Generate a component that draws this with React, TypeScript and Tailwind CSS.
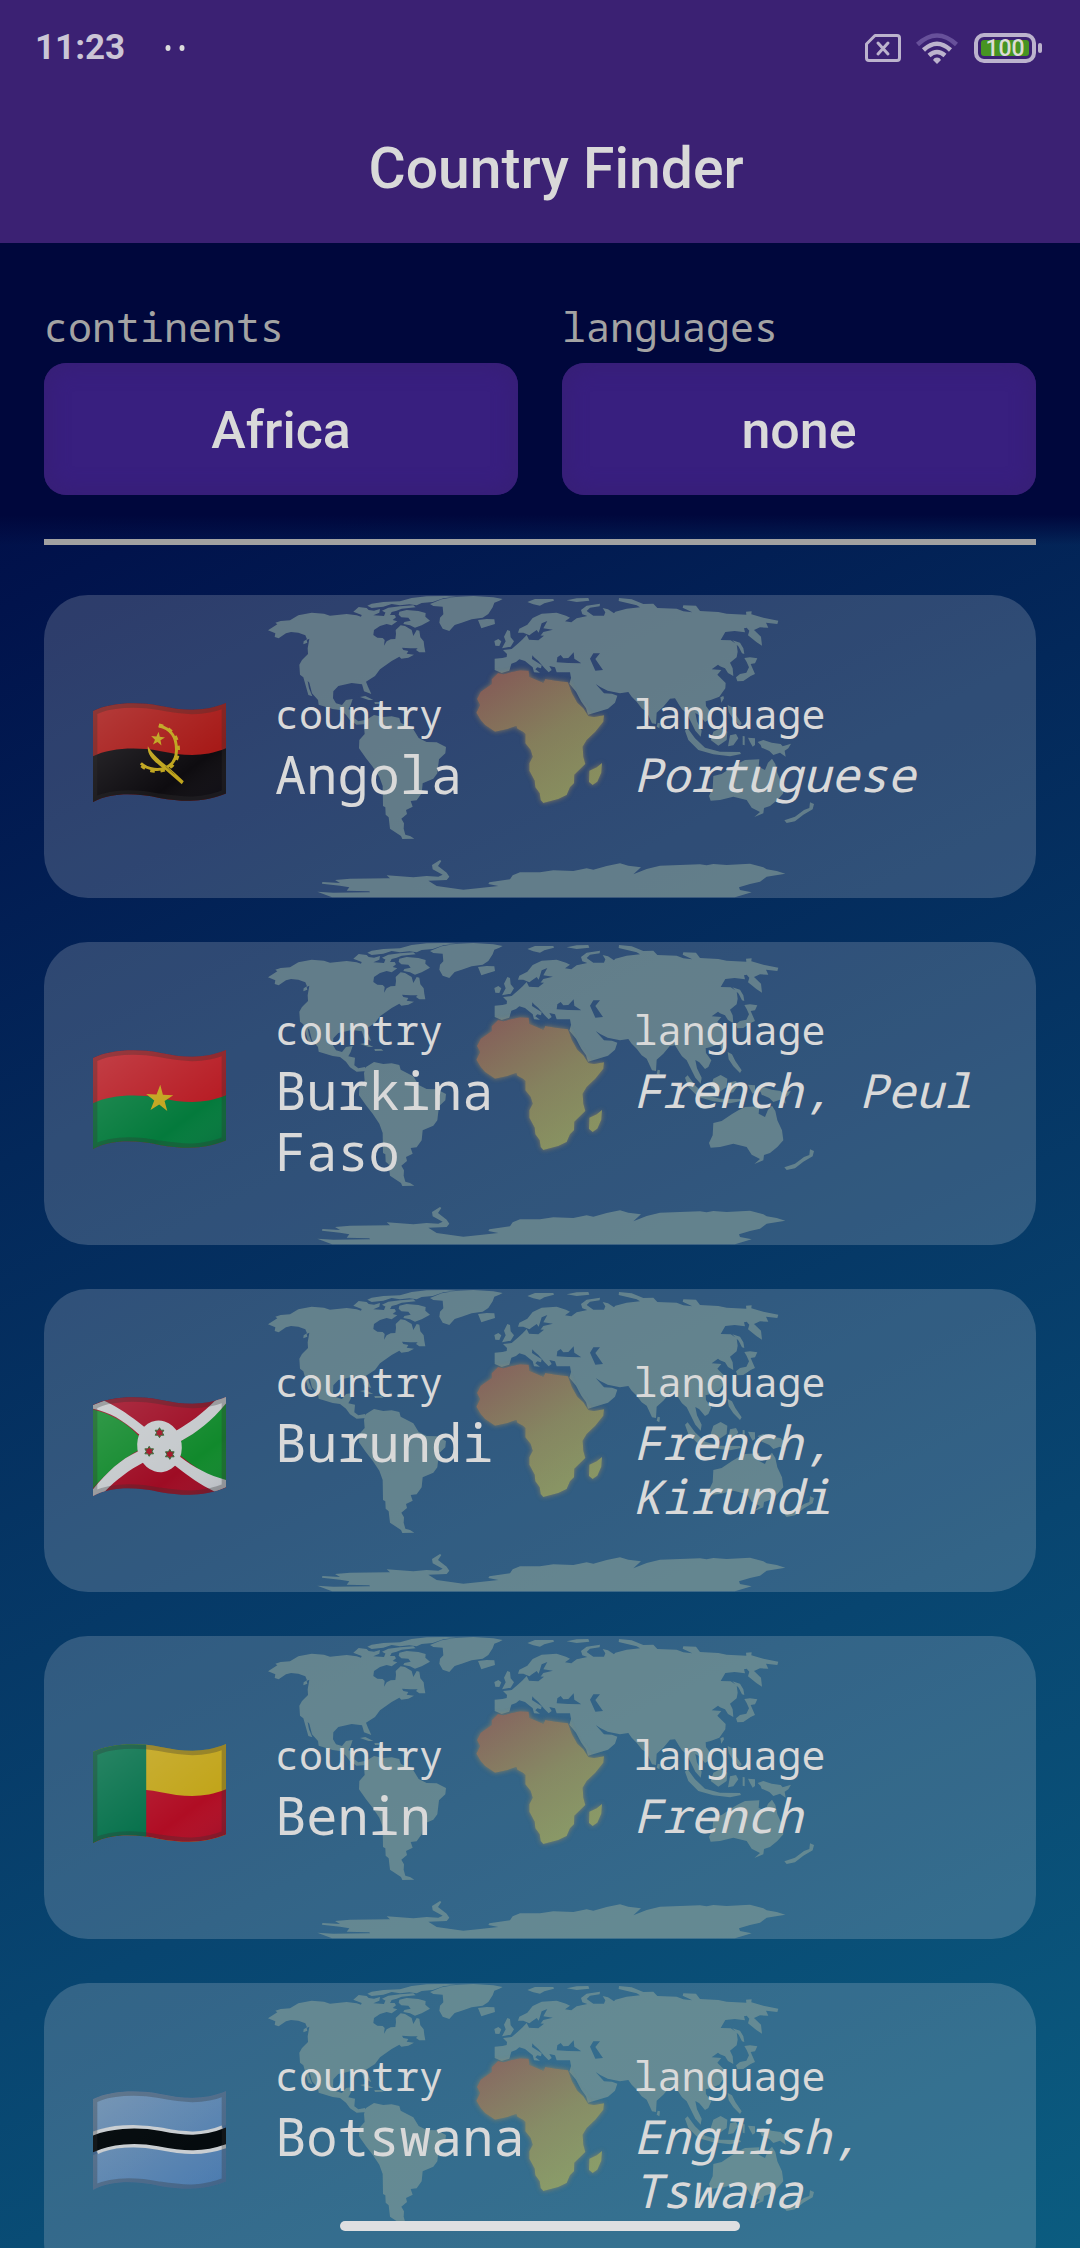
import React from "react";

type Flag = "angola" | "burkina" | "burundi" | "benin" | "botswana";

const countries: { name: string; languages: string; flag: Flag }[] = [
  { name: "Angola", languages: "Portuguese", flag: "angola" },
  { name: "Burkina Faso", languages: "French, Peul", flag: "burkina" },
  { name: "Burundi", languages: "French, Kirundi", flag: "burundi" },
  { name: "Benin", languages: "French", flag: "benin" },
  { name: "Botswana", languages: "English, Tswana", flag: "botswana" },
];

const OUTLINE =
  "M100 155C150 130 230 126 300 139C370 153 430 160 500 131V403C430 432 370 427 300 416C230 402 160 398 100 428Z";

const LOWER =
  "M100 291C150 266 230 262 300 275C370 289 430 296 500 267V440H100Z";

function star(cx: number, cy: number, r: number, points: number, inner: number, turn: number) {
  const out: string[] = [];
  for (let i = 0; i < points * 2; i++) {
    const radius = i % 2 ? r * inner : r;
    const a = ((turn - 90 + (i * 180) / points) * Math.PI) / 180;
    out.push(`${(cx + radius * Math.cos(a)).toFixed(1)},${(cy + radius * Math.sin(a)).toFixed(1)}`);
  }
  return out.join(" ");
}

function FlagArt({ flag }: { flag: Flag }) {
  switch (flag) {
    case "angola":
      return (
        <>
          <rect x="90" y="120" width="420" height="320" fill="#a71a18" />
          <path d={LOWER} fill="#0e0c10" />
          <path d="M298 199C338 208 352 240 351 274C350 312 322 334 284 330C268 328 254 322 244 312" fill="none" stroke="#bfa41c" strokeWidth="9" />
          <path d="M298 198C342 207 357 240 356 274C355 316 324 338 284 335C266 333 252 326 243 315" fill="none" stroke="#bfa41c" strokeWidth="11" strokeDasharray="13 17" />
          <path d="M265 261C276 280 300 304 326 323L348 343L373 366L367 375L342 353L316 331C286 308 262 290 265 261Z" fill="#bfa41c" />
          <path d="M318 321L345 345" stroke="#6b5c10" strokeWidth="2" />
          <polygon points={star(295, 239, 22, 5, 0.4, 6)} fill="#bfa41c" />
        </>
      );
    case "burkina":
      return (
        <>
          <rect x="90" y="120" width="420" height="320" fill="#b81e26" />
          <path d={LOWER} fill="#047a3c" />
          <polygon points={star(300, 278, 43, 5, 0.38, 3)} fill="#c3a41b" />
        </>
      );
    case "burundi":
      return (
        <>
          <rect x="90" y="120" width="420" height="320" fill="#9e0c24" />
          <path d="M100 168C150 180 200 205 240 250L240 290C190 315 145 355 100 405Z" fill="#11892c" />
          <path d="M500 150C460 195 415 235 360 265V305C410 345 450 372 500 384Z" fill="#11892c" />
          <path d="M100 166C150 176 190 200 236 241L300 270L236 294C180 320 145 355 100 408V440L134 416C170 378 212 348 250 328L300 300L350 340C390 370 420 395 468 416L500 402V380C450 368 400 340 364 312L300 270L366 262C410 238 455 205 500 150V120L466 143C430 180 390 210 350 232L300 260L250 217C215 190 175 160 134 142L100 155Z" fill="#c5c9cc" />
          <ellipse cx="300" cy="279" rx="67" ry="78" transform="rotate(-8 300 279)" fill="#c5c9cc" />
          {[[300, 238], [269, 294], [331, 303]].map(([x, y]) => (
            <polygon key={x} points={star(x, y, 15, 6, 0.58, 0)} fill="#a51327" stroke="#2f6634" strokeWidth="3" />
          ))}
        </>
      );
    case "benin":
      return (
        <>
          <rect x="90" y="120" width="420" height="320" fill="#c2a51b" />
          <path d={LOWER} fill="#b00d24" />
          <rect x="90" y="120" width="170" height="320" fill="#04704a" />
        </>
      );
    case "botswana":
      return (
        <>
          <rect x="90" y="120" width="420" height="320" fill="#4a7bb0" />
          <path d="M100 290C150 265 230 261 300 274C370 288 430 295 500 266" fill="none" stroke="#c9ced2" strokeWidth="68" />
          <path d="M90 294C150 265 230 261 300 274C370 288 430 295 510 262" fill="none" stroke="#050b0e" strokeWidth="47" />
        </>
      );
  }
}

function FlagIcon({ flag, label }: { flag: Flag; label: string }) {
  const clip = `clip-${flag}`;
  const shine = `shine-${flag}`;
  const shineOpacity = flag === "botswana" ? 0.12 : 1;
  return (
    <svg viewBox="100 128 400 303" className="h-[101px] w-[133px]" role="img" aria-label={`Flag of ${label}`}>
      <defs>
        <clipPath id={clip}>
          <path d={OUTLINE} />
        </clipPath>
        <linearGradient id={shine} x1="0" y1="0" x2="1" y2="1">
          <stop offset="0" stopColor="#ffffff" stopOpacity="0.15" />
          <stop offset="0.7" stopColor="#ffffff" stopOpacity="0" />
          <stop offset="1" stopColor="#000033" stopOpacity="0.1" />
        </linearGradient>
        <linearGradient id="sky" x1="0" y1="0" x2="1" y2="1">
          <stop offset="0" stopColor="#aab4b8" stopOpacity="0.45" />
          <stop offset="1" stopColor="#aab4b8" stopOpacity="0" />
        </linearGradient>
      </defs>
      <g clipPath={`url(#${clip})`}>
        <FlagArt flag={flag} />
        {flag === "botswana" && (
          <path
            d="M100 155C150 130 230 126 300 139C370 153 430 160 500 131V232C430 261 370 254 300 240C230 227 150 231 100 256ZM100 324C150 299 230 295 300 308C370 322 430 329 500 300V403C430 432 370 427 300 416C230 402 160 398 100 428Z"
            fill="url(#sky)"
          />
        )}
        <path d={OUTLINE} fill={`url(#${shine})`} fillOpacity={shineOpacity} />
        <path d={OUTLINE} fill="none" stroke="#333333" strokeOpacity="0.3" strokeWidth="26" />
      </g>
    </svg>
  );
}

const LAND = [
  // North America
  "M84 151L112 133L106 128L122 123L150 121L175 106L215 98L252 101L270 107L320 102L350 106L363 110L365 105L340 95L356 81L380 84L386 90L402 92L420 87L418 98L400 106L432 108L436 98L446 92L455 97L450 105L464 105L468 112L458 120L472 124L455 136L440 132L420 138L402 150L400 165L412 173L428 174L434 180L432 197L440 184L452 178L466 177L468 162L467 150L482 136L495 138L515 150L520 168L530 150L538 152L541 172L551 184L553 200L556 217L538 217L528 210L533 205L510 205L486 203L490 210L505 213L500 221L522 224L505 233L484 236L478 230L455 243L420 268L405 288L378 305L384 320L394 342L372 334L366 313L335 309L295 318L280 334L279 355L288 370L306 375L318 360L338 357L332 375L325 388L345 392L343 415L355 424L375 420L380 432L350 434L330 421L318 404L300 390L278 387L236 374L234 360L216 340L208 308L203 303L207 325L217 349L205 345L190 292L180 284L178 254L186 240L204 222L203 205L208 176L200 180L202 188L190 193L191 184L201 178L196 166L175 158L153 156L138 160L116 175L104 171L106 160Z",
  // Arctic islands
  "M382 77L395 71L430 66L480 64L515 54L560 49L620 48L650 50L610 55L578 66L545 69L530 76L508 73L480 76L455 72L430 80L395 84Z",
  "M426 92L445 83L480 79L520 76L527 82L485 86L470 92L440 100Z",
  "M478 95L500 90L535 93L557 99L556 110L570 122L545 136L525 143L510 136L490 132L493 126L512 122L505 113L484 112L476 104Z",
  // Greenland
  "M570 72L605 58L650 50L700 48L760 52L788 57L778 62L763 68L758 82L745 102L728 113L695 118L665 128L644 135L628 153L608 146L598 128L600 113L610 103L608 80L580 78Z",
  "M714 120L740 117L763 118L765 132L738 140L724 145Z",
  // Caribbean
  "M360 351L376 348L400 360L386 360Z M403 366L424 366L430 371L405 372Z",
  // South America
  "M378 420L402 405L430 411L455 409L478 414L482 428L520 448L536 474L560 486L590 487L618 501L616 520L597 538L592 580L580 596L548 610L545 640L530 661L512 663L518 680L498 690L501 702L484 716L492 730L491 746L496 764L510 768L523 776L487 777L483 768L450 746L446 712L437 704L436 682L429 678L428 618L418 590L398 560L378 535L357 505L358 480L374 462L372 438Z",
  // British Isles
  "M802 150L810 153L812 172L822 184L812 200L786 205L797 184L792 170Z M763 183L775 177L784 184L778 198L766 197Z",
  // Scandinavia and Svalbard
  "M862 66L885 57L940 57L942 62L913 70L900 77L880 73Z M980 61L1010 55L1045 54L1048 62L1010 66Z",
  // Eurasia
  "M764 236L787 234L800 231L801 222L789 210L815 207L835 190L848 178L860 165L867 179L895 181L912 167L892 166L890 153L868 166L850 158L834 158L838 146L862 134L878 114L905 101L950 98L978 107L990 113L975 124L994 127L1010 115L1042 108L1027 103L1023 90L1040 77L1080 71L1079 79L1050 83L1040 93L1060 107L1092 107L1096 97L1088 84L1104 88L1122 100L1125 121L1118 104L1126 95L1160 86L1200 82L1190 76L1136 63L1137 54L1175 58L1210 72L1240 71L1252 84L1310 86L1330 94L1357 97L1328 83L1330 76L1368 77L1380 93L1435 96L1460 101L1519 104L1518 95L1535 94L1534 103L1570 113L1615 122L1612 132L1578 128L1585 143L1560 142L1542 150L1563 170L1566 197L1550 187L1524 166L1528 152L1520 143L1512 145L1515 157L1484 153L1456 156L1442 180L1472 181L1490 193L1493 215L1490 232L1470 248L1478 265L1480 288L1464 279L1455 265L1440 259L1434 254L1415 268L1444 270L1432 284L1457 309L1456 325L1438 350L1412 360L1397 364L1398 378L1414 400L1405 420L1395 426L1378 406L1366 399L1371 424L1385 452L1382 470L1366 452L1350 420L1340 400L1326 388L1318 376L1305 355L1290 356L1270 380L1250 398L1248 432L1236 430L1220 395L1205 385L1190 365L1175 350L1165 336L1140 340L1103 332L1082 322L1067 312L1092 340L1116 341L1132 347L1125 368L1104 386L1072 396L1044 404L1038 385L1024 365L1008 335L988 311L993 294L990 277L950 277L945 262L928 258L935 270L926 277L914 265L895 243L882 232L877 226L876 237L905 256L903 265L892 262L886 268L900 278L882 277L878 262L855 243L838 238L828 246L814 251L808 272L785 279L764 270Z",
  // Japan, Korea, Kamchatka
  "M1477 181L1500 188L1510 205L1513 222L1506 220L1496 200Z M1513 234L1530 232L1552 235L1545 250L1532 252L1545 282L1532 288L1510 303L1492 304L1488 292L1500 282L1519 278L1527 262L1520 246Z",
  "M1441 352L1450 348L1452 355L1444 368Z M1463 375L1476 382L1486 402L1505 430L1500 438L1480 418L1466 397Z",
  "M1253 428L1260 430L1258 445L1250 440Z",
  // Indonesia and New Guinea
  "M1343 445L1365 475L1395 503L1440 515L1500 516L1503 522L1470 529L1420 523L1375 510L1345 480L1335 452Z",
  "M1420 455L1442 444L1462 455L1460 480L1435 497L1412 480Z M1470 466L1488 462L1495 475L1480 496L1464 499Z M1508 468L1514 469L1514 496L1508 494Z M1524 473L1545 475L1545 495L1538 500L1530 486Z",
  "M1553 486L1570 480L1595 488L1622 492L1628 499L1653 491L1645 505L1634 512L1637 530L1620 518L1600 525L1588 513L1565 503L1562 495Z",
  // Australia and New Zealand
  "M1420 588L1445 582L1475 562L1495 550L1515 540L1558 538L1556 560L1575 570L1584 548L1596 536L1606 552L1612 580L1626 610L1630 640L1612 660L1590 678L1572 684L1570 700L1543 711L1560 696L1535 683L1520 660L1480 650L1440 660L1412 662L1407 648L1418 625Z",
  "M1710 667L1722 672L1718 688L1690 704L1665 724L1640 729L1633 721L1665 710L1692 690L1708 684Z",
  // Antarctica
  "M232 935L280 938L390 937L388 934L320 932L328 922L300 917L246 911L247 906L300 909L285 900L330 896L450 895L440 886L520 892L560 888L595 890L608 884L578 868L576 855L600 840L604 843L594 858L620 878L628 890L620 900L565 902L590 918L670 929L720 924L775 918L745 912L748 907L810 898L818 886L840 877L900 877L940 871L1000 873L1040 865L1060 869L1100 858L1140 850L1165 857L1203 862L1180 883L1220 867L1260 857L1380 853L1400 856L1420 852L1460 855L1530 851L1570 862L1580 868L1610 873L1636 881L1580 890L1560 905L1530 912L1497 922L1500 930L1535 937L1485 952L276 952Z",
].join(" ");

const AFRICA =
  "M774 279L790 283L812 277L840 271L866 272L868 290L910 308L916 297L948 302L984 307L996 340L1012 368L1030 385L1045 408L1062 411L1092 406L1090 425L1066 455L1040 480L1028 500L1030 530L1036 552L1003 584L1002 610L990 622L980 645L955 657L910 669L902 660L899 640L886 622L884 602L868 572L868 550L878 530L872 510L856 490L856 462L850 456L832 446L829 438L800 448L765 455L735 435L722 420L709 398L720 375L711 357L722 335L755 312L755 298Z M1086 549L1084 578L1072 605L1058 615L1047 606L1048 572L1070 562Z";

const SEAS =
  "M950 247L952 232L962 225L970 235L985 234L1001 217L1003 236L1024 250L985 249Z M1050 236L1060 220L1080 220L1066 237L1089 270L1066 272Z M872 163L890 150L896 158L905 130L922 123L910 145L939 149L910 156L898 172L888 180L870 176Z";

function WorldMap() {
  return (
    <svg viewBox="-588 45 2976 909" className="absolute inset-0 h-full w-full" aria-hidden="true">
      <defs>
        <linearGradient id="africa-fill" x1="0" y1="0" x2="0.6" y2="1">
          <stop offset="0.1" stopColor="#b96c48" />
          <stop offset="0.6" stopColor="#b9a04e" />
          <stop offset="1" stopColor="#beb852" />
        </linearGradient>
        <filter id="glow" x="-20%" y="-20%" width="140%" height="140%">
          <feGaussianBlur stdDeviation="8" />
        </filter>
        <mask id="sea-mask" maskUnits="userSpaceOnUse" x="-588" y="45" width="2976" height="909">
          <rect x="-588" y="45" width="2976" height="909" fill="white" />
          <path d={SEAS} fill="black" />
        </mask>
        <mask id="africa-mask" maskUnits="userSpaceOnUse" x="-588" y="45" width="2976" height="909">
          <rect x="-588" y="45" width="2976" height="909" fill="white" />
          <path d={AFRICA} fill="black" />
        </mask>
      </defs>
      <path d={LAND} fill="#859e98" fillOpacity="0.6" mask="url(#sea-mask)" />
      <g mask="url(#africa-mask)">
        <path d={AFRICA} fill="#a98b52" fillOpacity="0.7" filter="url(#glow)" />
      </g>
      <path d={AFRICA} fill="url(#africa-fill)" fillOpacity="0.62" />
    </svg>
  );
}

function StatusBar() {
  return (
    <div className="flex h-24 items-center pr-[38px] pl-[35px] text-[#cbc5d6]">
      <span className="text-[35px] leading-10 font-bold">11:23</span>
      <svg viewBox="0 0 20 6" className="ml-10 h-[6px] w-5" aria-hidden="true">
        <ellipse cx="3" cy="3" rx="2.5" ry="3" fill="#dcdcdc" />
        <ellipse cx="17" cy="3" rx="2.5" ry="3" fill="#dcdcdc" />
      </svg>
      <svg viewBox="0 0 36 28" className="ml-auto h-7 w-9" fill="none" stroke="#bcb3cd" strokeWidth="3" aria-label="No SIM">
        <path d="M10 1.5H32Q34.500 1.500 34.500 4V24Q34.500 26.500 32 26.500H4Q1.500 26.500 1.500 24V10Z" strokeLinejoin="round" />
        <path d="M13 9L23 20M23 9L13 20" strokeLinecap="round" />
      </svg>
      <svg viewBox="0 0 42 31" className="ml-[15px] h-[31px] w-[42px]" fill="none" stroke="#bcb3cd" strokeWidth="4.500" aria-label="Wi-Fi">
        <path d="M1.500 11.500Q21 -6.500 40.500 11.500" stroke="#67509a" />
        <path d="M7.500 17Q21 4.500 34.500 17" />
        <path d="M13 22.500Q21 15.500 29 22.500" />
        <path d="M21 31L17 27A4.500 4.500 0 0 1 25 27Z" fill="#bcb3cd" stroke="none" />
      </svg>
      <div className="ml-4 flex items-center gap-[2px]">
        <span className="flex h-[30px] w-[62px] items-center justify-center rounded-[10px] border-4 border-[#bcb3cd] p-[3px]">
          <span className="flex h-4 w-full items-center justify-center rounded-[3px] bg-[#479422] text-[23px] leading-none font-medium text-[#dcdcd6]">100</span>
        </span>
        <span className="h-[10px] w-1 rounded-full bg-[#bcb3cd]" />
      </div>
    </div>
  );
}

function Filter({ id, label, value }: { id: string; label: string; value: string }) {
  return (
    <div className="flex flex-1 flex-col">
      <label htmlFor={id} className="font-['Noto_Sans_Mono','DejaVu_Sans_Mono',monospace] text-[40px] leading-[48px] text-[#a3a3a3]">
        {label}
      </label>
      <button
        id={id}
        type="button"
        className="mt-3 flex h-[132px] items-center justify-center rounded-[22px] bg-[#381f7f] pt-1 text-[52px] font-medium text-[#d9d9d9] shadow-[inset_0_0_20px_4px_#371f76]"
      >
        {value}
      </button>
    </div>
  );
}

function CountryCard({ name, languages, flag }: { name: string; languages: string; flag: Flag }) {
  return (
    <li className="relative flex h-[303px] shrink-0 items-center overflow-hidden rounded-[44px] bg-[#e0e0e8]/20 pr-11 pl-[49px]">
      <WorldMap />
      <div className="relative mt-3 w-[182px] shrink-0">
        <FlagIcon flag={flag} label={name} />
      </div>
      <dl className="relative grid flex-1 grid-cols-2 font-['Noto_Sans_Mono','DejaVu_Sans_Mono',monospace] text-[#d9d9d9]">
        <div>
          <dt className="text-[40px] leading-[47px]">country</dt>
          <dd className="mt-[6px] text-[52px] leading-[61px]">{name}</dd>
        </div>
        <div>
          <dt className="text-[40px] leading-[47px]">language</dt>
          <dd className="mt-[10px] text-[47px] leading-[54px] italic">{languages}</dd>
        </div>
      </dl>
    </li>
  );
}

export default function App() {
  return (
    <div className="relative flex h-screen flex-col overflow-hidden bg-[linear-gradient(154deg,#00003c_0%,#01134c_22%,#03285a_42%,#084570_73%,#0b5c80_100%)] font-[Roboto,sans-serif]">
      <header className="shrink-0 bg-[#3b2173]">
        <StatusBar />
        <h1 className="pt-[37px] pb-[38px] pl-8 text-center text-[57px] leading-[72px] font-medium text-[#d9d9d9]">Country Finder</h1>
      </header>
      <section className="shrink-0 bg-[linear-gradient(#00073c_90%,transparent)] px-11 pt-15">
        <div className="flex gap-11">
          <Filter id="continents" label="continents" value="Africa" />
          <Filter id="languages" label="languages" value="none" />
        </div>
        <hr className="mt-11 border-t-[6px] border-[#a1a1a1]" />
      </section>
      <ul className="flex min-h-0 flex-1 flex-col gap-11 overflow-hidden px-11 pt-[50px]">
        {countries.map((c) => (
          <CountryCard key={c.name} {...c} />
        ))}
      </ul>
      <div className="absolute bottom-[17px] left-1/2 h-[10px] w-[400px] -translate-x-1/2 rounded-full bg-[#dedfe1]" />
    </div>
  );
}
